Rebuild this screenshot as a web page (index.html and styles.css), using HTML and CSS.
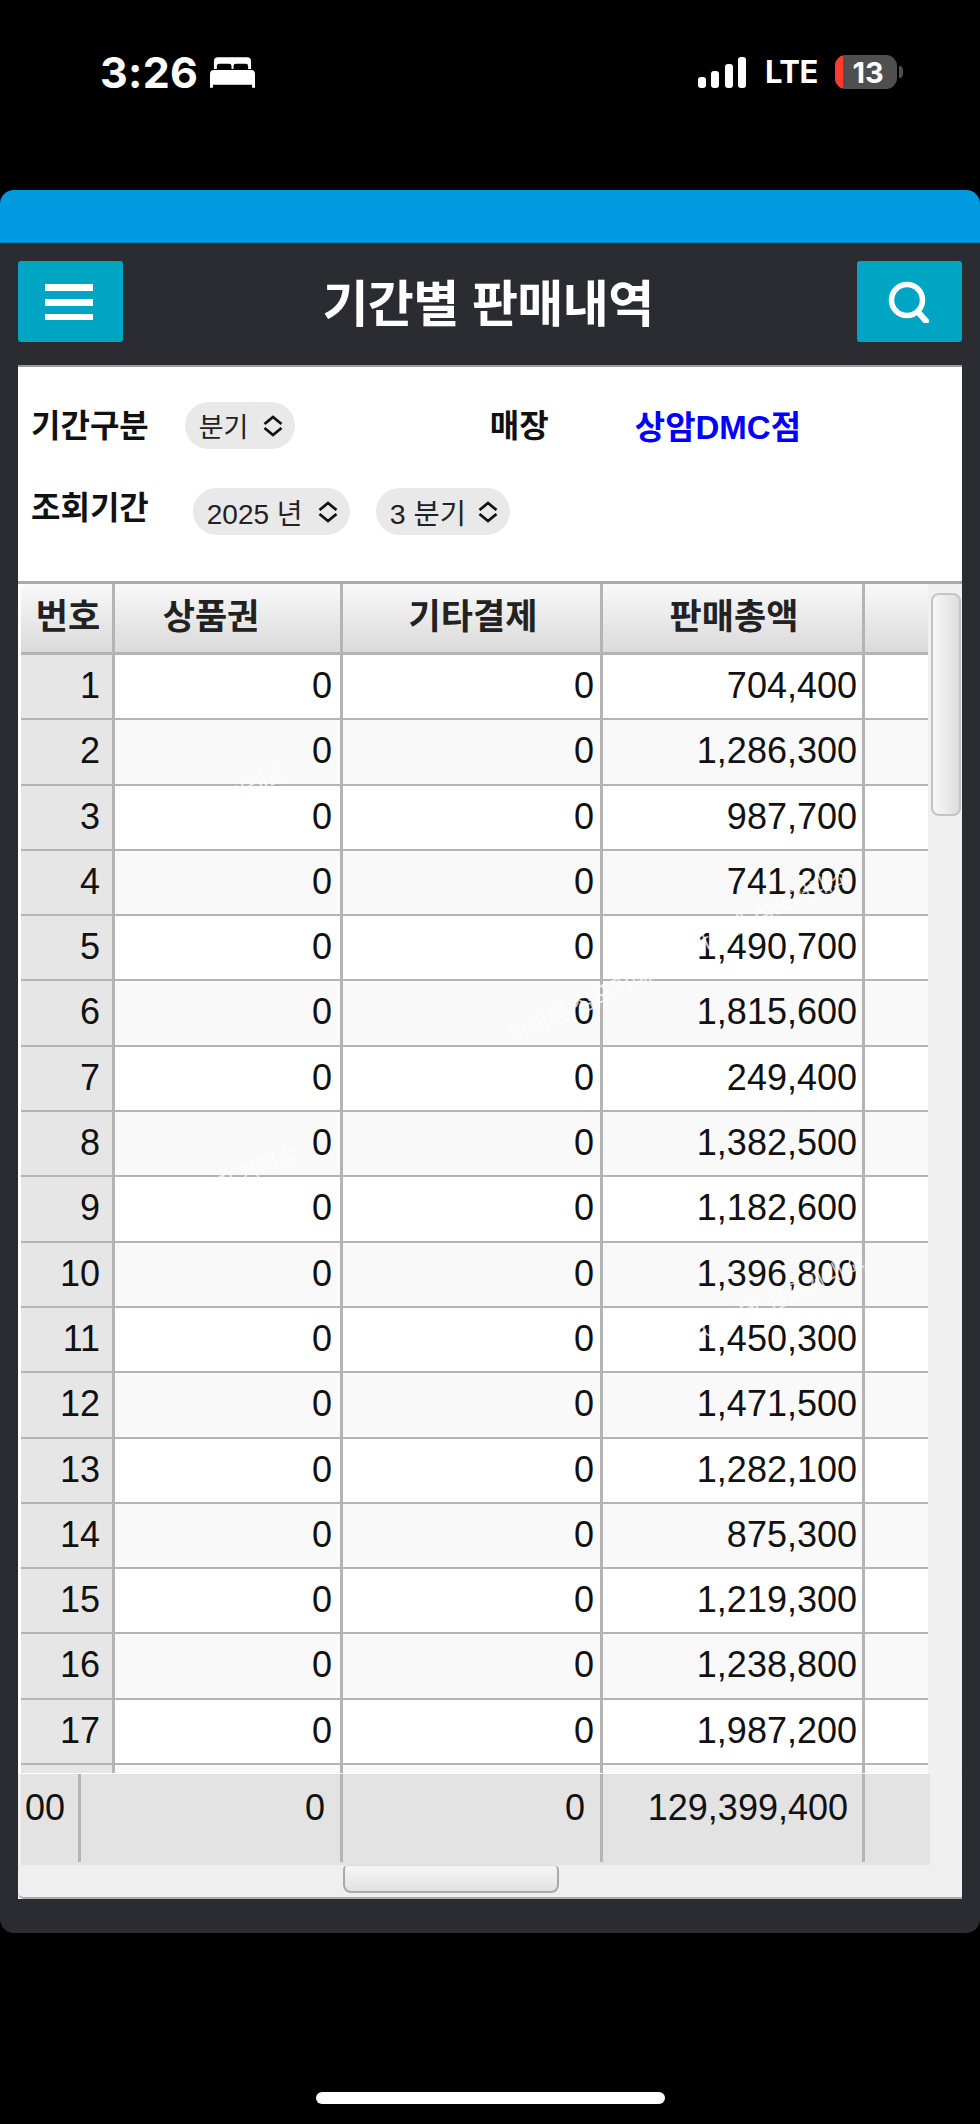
FILE: index.html
```html
<!DOCTYPE html>
<html lang="ko">
<head>
<meta charset="utf-8">
<title>기간별 판매내역</title>
<link rel="stylesheet" href="styles.css">
</head>
<body>
<div class="status">
  <div class="status-left">
    <span class="time">3:26</span>
    <svg class="bed" viewBox="0 0 46 31"><path fill="#fff" fill-rule="evenodd" d="M8 0h30a4 4 0 0 1 4 4v8h-3V9a2.500 2.500 0 0 0-2.500-2.500h-10A2.500 2.500 0 0 0 24 9v3h-2V9a2.500 2.500 0 0 0-2.500-2.500h-10A2.500 2.500 0 0 0 7 9v3H4V4a4 4 0 0 1 4-4z"/><path fill="#fff" d="M4 13h38a4 4 0 0 1 4 4v14h-3v-3H3v3H0V17a4 4 0 0 1 4-4z"/></svg>
  </div>
  <div class="status-right">
    <svg class="signal" viewBox="0 0 49 31"><rect x="0" y="20" width="8" height="11" rx="3" fill="#fff"/><rect x="13" y="14" width="8" height="17" rx="3" fill="#fff"/><rect x="27" y="7" width="8" height="24" rx="3" fill="#fff"/><rect x="40" y="0" width="8" height="31" rx="3" fill="#fff"/></svg>
    <span class="lte">LTE</span>
    <div class="battery"><span class="battery-red"></span><span class="battery-num">13</span></div>
    <span class="battery-cap"></span>
  </div>
</div>

<main class="panel">
  <div class="panel-blue"></div>
  <div class="panel-dark">
    <header class="topbar">
      <button class="icon-btn" type="button" aria-label="메뉴">
        <svg class="menu-icon" viewBox="0 0 48 36"><rect y="0" width="48" height="7" fill="#fff"/><rect y="15" width="48" height="7" fill="#fff"/><rect y="30" width="48" height="6" fill="#fff"/></svg>
      </button>
      <h1 class="title">기간별 판매내역</h1>
      <button class="icon-btn" type="button" aria-label="검색">
        <svg class="search-icon" viewBox="0 0 44 42"><circle cx="19" cy="19" r="15.5" fill="none" stroke="#fff" stroke-width="5.5"/><path d="M30 31l8 9" stroke="#fff" stroke-width="6" stroke-linecap="round"/></svg>
      </button>
    </header>

    <section class="sheet">
      <div class="filters">
        <div class="filter-row first">
          <span class="label">기간구분</span>
          <span class="select sel-type">분기<svg class="updown" viewBox="0 0 20 22"><path d="M1.500 9L10 2l8.500 7M1.500 13l8.500 7 8.500-7" fill="none" stroke="#111" stroke-width="2.800"/></svg></span>
          <span class="label label-store">매장</span>
          <span class="store">상암DMC점</span>
        </div>
        <div class="filter-row second">
          <span class="label">조회기간</span>
          <span class="select sel-year">2025 년<svg class="updown" viewBox="0 0 20 22"><path d="M1.500 9L10 2l8.500 7M1.500 13l8.500 7 8.500-7" fill="none" stroke="#111" stroke-width="2.800"/></svg></span>
          <span class="select sel-q">3 분기<svg class="updown" viewBox="0 0 20 22"><path d="M1.500 9L10 2l8.500 7M1.500 13l8.500 7 8.500-7" fill="none" stroke="#111" stroke-width="2.800"/></svg></span>
        </div>
      </div>

      <div class="grid-wrap">
        <div class="grid-body">
          <div class="grid">
            <div class="row head"><div class="c c-no">번호</div><div class="c c-a">상품권</div><div class="c c-b">기타결제</div><div class="c c-c">판매총액</div><div class="c c-d"></div></div>
            <div class="row"><div class="c c-no">1</div><div class="c c-a">0</div><div class="c c-b">0</div><div class="c c-c">704,400</div><div class="c c-d"></div></div>
            <div class="row"><div class="c c-no">2</div><div class="c c-a">0</div><div class="c c-b">0</div><div class="c c-c">1,286,300</div><div class="c c-d"></div></div>
            <div class="row"><div class="c c-no">3</div><div class="c c-a">0</div><div class="c c-b">0</div><div class="c c-c">987,700</div><div class="c c-d"></div></div>
            <div class="row"><div class="c c-no">4</div><div class="c c-a">0</div><div class="c c-b">0</div><div class="c c-c">741,200</div><div class="c c-d"></div></div>
            <div class="row"><div class="c c-no">5</div><div class="c c-a">0</div><div class="c c-b">0</div><div class="c c-c">1,490,700</div><div class="c c-d"></div></div>
            <div class="row"><div class="c c-no">6</div><div class="c c-a">0</div><div class="c c-b">0</div><div class="c c-c">1,815,600</div><div class="c c-d"></div></div>
            <div class="row"><div class="c c-no">7</div><div class="c c-a">0</div><div class="c c-b">0</div><div class="c c-c">249,400</div><div class="c c-d"></div></div>
            <div class="row"><div class="c c-no">8</div><div class="c c-a">0</div><div class="c c-b">0</div><div class="c c-c">1,382,500</div><div class="c c-d"></div></div>
            <div class="row"><div class="c c-no">9</div><div class="c c-a">0</div><div class="c c-b">0</div><div class="c c-c">1,182,600</div><div class="c c-d"></div></div>
            <div class="row"><div class="c c-no">10</div><div class="c c-a">0</div><div class="c c-b">0</div><div class="c c-c">1,396,800</div><div class="c c-d"></div></div>
            <div class="row"><div class="c c-no">11</div><div class="c c-a">0</div><div class="c c-b">0</div><div class="c c-c">1,450,300</div><div class="c c-d"></div></div>
            <div class="row"><div class="c c-no">12</div><div class="c c-a">0</div><div class="c c-b">0</div><div class="c c-c">1,471,500</div><div class="c c-d"></div></div>
            <div class="row"><div class="c c-no">13</div><div class="c c-a">0</div><div class="c c-b">0</div><div class="c c-c">1,282,100</div><div class="c c-d"></div></div>
            <div class="row"><div class="c c-no">14</div><div class="c c-a">0</div><div class="c c-b">0</div><div class="c c-c">875,300</div><div class="c c-d"></div></div>
            <div class="row"><div class="c c-no">15</div><div class="c c-a">0</div><div class="c c-b">0</div><div class="c c-c">1,219,300</div><div class="c c-d"></div></div>
            <div class="row"><div class="c c-no">16</div><div class="c c-a">0</div><div class="c c-b">0</div><div class="c c-c">1,238,800</div><div class="c c-d"></div></div>
            <div class="row"><div class="c c-no">17</div><div class="c c-a">0</div><div class="c c-b">0</div><div class="c c-c">1,987,200</div><div class="c c-d"></div></div>
            <div class="row sliver"><div class="c c-no"></div><div class="c c-a"></div><div class="c c-b"></div><div class="c c-c"></div><div class="c c-d"></div></div>
          </div>
          <div class="vscroll"><div class="vthumb"></div></div>
        </div>
        <div class="total">
          <div class="t t-no">00</div><div class="t t-a">0</div><div class="t t-b">0</div><div class="t t-c">129,399,400</div><div class="t t-d"></div>
        </div>
        <div class="hscroll"><div class="hthumb"></div></div>
      </div>
    </section>
  </div>
</main>

<div class="home"><span class="home-bar"></span></div>

<span class="wm wm-a">아이템 점포거래소</span>
<span class="wm wm-b">아이템 점포거래소</span>
<span class="wm wm-c">아이템 점포거래소</span>
<span class="wm wm-d">아이템 점포거래소</span>
<span class="wm wm-e">아이템 점포거래소</span>
</body>
</html>
```
FILE: styles.css
```css
* { box-sizing: border-box; }
html, body { margin: 0; padding: 0; }
body {
  width: 980px;
  height: 2124px;
  background: #000;
  font-family: "Liberation Sans", "Noto Sans CJK KR", sans-serif;
  color: #111;
  overflow: hidden;
}

/* status bar */
.status {
  height: 190px;
  display: flex;
  justify-content: space-between;
  align-items: flex-start;
  padding: 55px 77px 0 100px;
  color: #fff;
}
.status-left { display: flex; align-items: center; height: 34px; gap: 12px; }
.time { font-family: Inter, "Liberation Sans", sans-serif; font-size: 43px; font-weight: 700; line-height: 34px; letter-spacing: 0.3px; }
.bed { width: 45px; height: 31px; }
.status-right { display: flex; align-items: center; height: 34px; }
.signal { width: 49px; height: 31px; }
.lte { font-family: Inter, "Liberation Sans", sans-serif; font-size: 31px; font-weight: 700; margin-left: 18px; width: 52px; line-height: 34px; letter-spacing: -0.5px; }
.battery { position: relative; width: 62px; height: 34px; margin-left: 18px; border-radius: 11px; background: #4f4f4f; overflow: hidden; display: flex; align-items: center; justify-content: center; }
.battery-red { position: absolute; left: 0; top: 0; bottom: 0; width: 8px; background: #ff3b30; }
.battery-num { position: relative; font-family: Inter, "Liberation Sans", sans-serif; font-size: 29px; font-weight: 700; color: #fff; padding-left: 4px; }
.battery-cap { width: 4px; height: 12px; margin-left: 2px; background: #4f4f4f; border-radius: 0 6px 6px 0; }

/* panel */
.panel { height: 1743px; }
.panel-blue { height: 53px; background: #019ae0; border-radius: 14px 14px 0 0; border-bottom: 1px solid #0188c8; }
.panel-dark { height: 1690px; background: #2b2c31; border-radius: 0 0 14px 14px; padding: 18px 18px 0 18px; display: flex; flex-direction: column; align-items: stretch; }

.topbar { display: flex; justify-content: space-between; align-items: center; height: 81px; margin-bottom: 23px; }
.icon-btn { width: 105px; height: 81px; padding: 0; border: 0; border-radius: 3px; background: #00a5c4; display: flex; align-items: center; justify-content: center; }
.menu-icon { width: 48px; height: 36px; margin-left: -3px; }
.search-icon { width: 44px; height: 42px; }
.title { margin: 8px 4px 0 0; font-size: 50px; font-weight: 700; color: #fff; line-height: 73px; letter-spacing: -0.6px; }

/* sheet */
.sheet { height: 1534px; background: #fff; border-top: 2px solid #9a9a9a; display: flex; flex-direction: column; }
.filters { height: 214px; flex: none; }
.filter-row { display: flex; align-items: center; padding-left: 13px; }
.filter-row.first { height: 47px; margin-top: 35px; }
.filter-row.second { height: 47px; margin-top: 39px; }
.label { font-size: 32px; font-weight: 700; color: #111; line-height: 47px; white-space: nowrap; padding-top: 2px; }
.filter-row.second .label { padding: 0 0 6px; }
.select { display: inline-flex; align-items: center; justify-content: space-between; height: 47px; border-radius: 24px; background: #e9e9e9; font-size: 27px; color: #222; padding: 0 12px 0 14px; white-space: nowrap; }
.updown { width: 20px; height: 22px; flex: none; }
.sel-type { width: 110px; margin-left: 36px; }
.sel-year { width: 157px; margin-left: 44px; font-size: 28px; }
.sel-q { width: 134px; margin-left: 26px; font-size: 28.5px; }
.label-store { margin-left: 195px; width: 145px; }
.store { font-size: 33px; font-weight: 700; color: #00f; white-space: nowrap; padding-bottom: 2px; }

/* grid */
.grid-wrap { flex: 1; display: flex; flex-direction: column; background: #efefef; border-top: 3px solid #a9a9a9; border-bottom: 2px solid #a9a9a9; border-radius: 0 0 0 6px; }
.grid-body { height: 1190px; display: flex; background: #fff; flex: none; }
.grid { width: 910px; padding-left: 3px; flex: none; }
.row { display: flex; height: 65.3px; border-bottom: 2px solid #b4b4b4; background: #fff; }
.row:nth-child(odd):not(.head) { background: #f9f9f9; }
.row.head { height: 71px; border-bottom-width: 3px; background: linear-gradient(#f9f9f9, #dadada); border-radius: 6px 0 0 0; }
.row.sliver { height: 8px; border-bottom: 0; background: #f6f6f6; }
.c { font-size: 36px; line-height: 61px; text-align: right; padding-right: 5px; border-right: 3px solid #b4b4b4; white-space: nowrap; color: #111; }
.c-no { width: 94px; background: #e6e6e6; padding-right: 12px; }
.c-a { width: 228px; padding-right: 8px; }
.c-b { width: 260px; padding-right: 6px; }
.c-c { width: 262px; }
.c-d { flex: 1; border-right: 0; }
.head .c { font-size: 35px; font-weight: 700; text-align: center; line-height: 66px; background: none; padding: 0 0 0 3px; color: #222; }
.head .c-a { padding: 0 33px 0 0; }
.vscroll { flex: 1; background: #f0f0f0; padding: 9px 1px 0 3px; }
.vthumb { height: 223px; border: 2px solid #c4c4c4; border-radius: 8px; background: linear-gradient(90deg, #f8f8f8, #dddddd); }

.total { display: flex; height: 91px; width: 909px; margin-left: 3px; background: #e3e3e3; flex: none; }
.t { font-size: 36px; line-height: 68px; height: 88px; text-align: right; border-right: 3px solid #b4b4b4; color: #111; white-space: nowrap; }
.t-no { width: 60px; text-align: left; padding-left: 4px; }
.t-a { width: 262px; padding-right: 15px; }
.t-b { width: 260px; padding-right: 15px; }
.t-c { width: 262px; padding-right: 14px; }
.t-d { flex: 1; border-right: 0; }

.hscroll { flex: 1; padding-left: 325px; }
.hthumb { width: 216px; height: 28px; border: 2px solid #a9a9a9; border-top: 1px solid #dcdcdc; border-radius: 5px 5px 8px 8px; background: linear-gradient(#f6f6f6, #e2e2e2); }

/* home */
.home { display: flex; justify-content: center; padding-top: 159px; }
.home-bar { width: 349px; height: 12px; border-radius: 6px; background: #fff; }

/* faint diagonal watermark over the photo */
.wm { position: absolute; width: 250px; height: 30px; line-height: 30px; text-align: center; font-size: 23px; color: rgba(255, 255, 255, 0.75); white-space: nowrap; transform: rotate(-25deg); }
.wm-a { left: 82px; top: 793px; }
.wm-b { left: 645px; top: 895px; }
.wm-c { left: 92px; top: 1172px; }
.wm-d { left: 465px; top: 985px; }
.wm-e { left: 658px; top: 1282px; }
```
